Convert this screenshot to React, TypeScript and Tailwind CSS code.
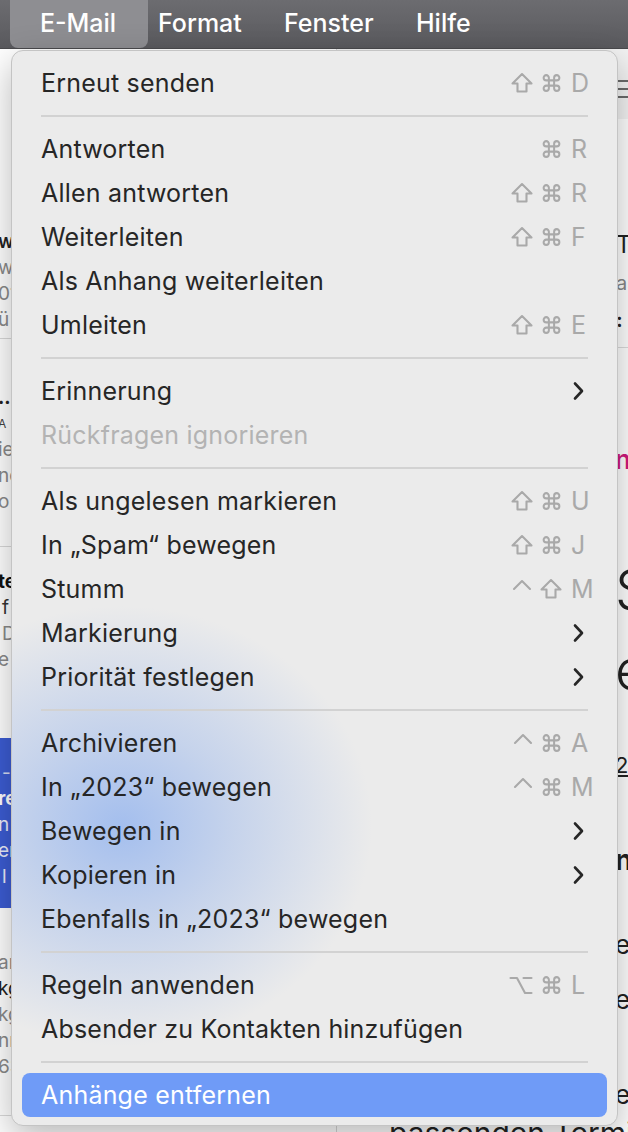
import React from 'react';

type Mod = 'shift' | 'cmd' | 'ctrl' | 'opt';

type Item =
  | { kind: 'sep' }
  | { kind: 'item'; label: string; mods?: Mod[]; k?: string; sub?: boolean; disabled?: boolean; active?: boolean };

const menu: Item[] = [
  { kind: 'item', label: 'Erneut senden', mods: ['shift', 'cmd'], k: 'D' },
  { kind: 'sep' },
  { kind: 'item', label: 'Antworten', mods: ['cmd'], k: 'R' },
  { kind: 'item', label: 'Allen antworten', mods: ['shift', 'cmd'], k: 'R' },
  { kind: 'item', label: 'Weiterleiten', mods: ['shift', 'cmd'], k: 'F' },
  { kind: 'item', label: 'Als Anhang weiterleiten' },
  { kind: 'item', label: 'Umleiten', mods: ['shift', 'cmd'], k: 'E' },
  { kind: 'sep' },
  { kind: 'item', label: 'Erinnerung', sub: true },
  { kind: 'item', label: 'Rückfragen ignorieren', disabled: true },
  { kind: 'sep' },
  { kind: 'item', label: 'Als ungelesen markieren', mods: ['shift', 'cmd'], k: 'U' },
  { kind: 'item', label: 'In „Spam“ bewegen', mods: ['shift', 'cmd'], k: 'J' },
  { kind: 'item', label: 'Stumm', mods: ['ctrl', 'shift'], k: 'M' },
  { kind: 'item', label: 'Markierung', sub: true },
  { kind: 'item', label: 'Priorität festlegen', sub: true },
  { kind: 'sep' },
  { kind: 'item', label: 'Archivieren', mods: ['ctrl', 'cmd'], k: 'A' },
  { kind: 'item', label: 'In „2023“ bewegen', mods: ['ctrl', 'cmd'], k: 'M' },
  { kind: 'item', label: 'Bewegen in', sub: true },
  { kind: 'item', label: 'Kopieren in', sub: true },
  { kind: 'item', label: 'Ebenfalls in „2023“ bewegen' },
  { kind: 'sep' },
  { kind: 'item', label: 'Regeln anwenden', mods: ['opt', 'cmd'], k: 'L' },
  { kind: 'item', label: 'Absender zu Kontakten hinzufügen' },
  { kind: 'sep' },
  { kind: 'item', label: 'Anhänge entfernen', active: true },
];

// slivers of the mail list that peek out left of the menu
const listRows: { h: number; cls: string; lines: { t: string; c: string }[] }[] = [
  { h: 176, cls: '', lines: [] },
  {
    h: 114,
    cls: 'pt-[4px] border-b border-[#d9d9d9]',
    lines: [
      { t: 'wi', c: 'text-[#222] font-semibold' },
      { t: 'wi', c: 'text-[#8a8a8a]' },
      { t: '01', c: 'text-[#8a8a8a]' },
      { t: 'ü', c: 'text-[#8a8a8a]' },
    ],
  },
  {
    h: 208,
    cls: 'pt-[46px] border-b border-[#d9d9d9]',
    lines: [
      { t: '..', c: 'text-[#222] font-bold' },
      { t: 'A', c: 'text-[#444] text-[12px]' },
      { t: 'ie', c: 'text-[#8a8a8a]' },
      { t: 'ne', c: 'text-[#8a8a8a]' },
      { t: 'o', c: 'text-[#8a8a8a]' },
    ],
  },
  {
    h: 191,
    cls: 'pt-[22px]',
    lines: [
      { t: 'te', c: 'text-[#111] font-bold' },
      { t: 'f', c: 'text-[#333] pl-[4px]' },
      { t: 'D', c: 'text-[#8a8a8a] pl-[4px]' },
      { t: 'e', c: 'text-[#8a8a8a]' },
    ],
  },
  {
    h: 170,
    cls: 'pt-[22px] bg-[#3c5cd3] text-white',
    lines: [
      { t: '-', c: 'text-white/80 pl-[4px]' },
      { t: 're', c: 'text-white font-bold' },
      { t: 'n', c: 'text-white/90' },
      { t: 'er', c: 'text-white/90' },
      { t: 'l', c: 'text-white/90 pl-[4px]' },
    ],
  },
  {
    h: 208,
    cls: 'pt-[42px] border-b border-[#d9d9d9]',
    lines: [
      { t: 'ar', c: 'text-[#8a8a8a]' },
      { t: 'kg', c: 'text-[#222]' },
      { t: 'kg', c: 'text-[#8a8a8a]' },
      { t: 'nr', c: 'text-[#8a8a8a]' },
      { t: '63', c: 'text-[#8a8a8a]' },
    ],
  },
];

const ModIcon: React.FC<{ m: Mod }> = ({ m }) => {
  const common = {
    fill: 'none',
    stroke: '#a9a9a9',
    strokeWidth: 2.1,
    strokeLinecap: 'round' as const,
    strokeLinejoin: 'round' as const,
  };
  if (m === 'shift')
    return (
      <svg width="22" height="22" viewBox="0 0 22 22" className="block">
        <path d="M11 2 L20.5 11.5 H15.5 V19.5 H6.5 V11.5 H1.5 Z" {...common} />
      </svg>
    );
  if (m === 'cmd')
    return (
      <svg width="21" height="22" viewBox="0 0 24 24" className="block">
        <path
          d="M15 6v12a3 3 0 1 0 3-3H6a3 3 0 1 0 3 3V6a3 3 0 1 0-3 3h12a3 3 0 1 0-3-3"
          {...common}
          strokeWidth={2.3}
        />
      </svg>
    );
  if (m === 'ctrl')
    return (
      <svg width="20" height="22" viewBox="0 0 20 22" className="block">
        <path d="M2 11 L10 3 L18 11" {...common} />
      </svg>
    );
  return (
    <svg width="24" height="22" viewBox="0 0 24 22" className="block">
      <path d="M1.5 4 H8 L16 19 H22.5 M14.5 4 H22.5" {...common} />
    </svg>
  );
};

const Chevron = () => (
  <svg width="14" height="20" viewBox="0 0 14 20" className="block">
    <path d="M4 2.5 L11 10 L4 17.5" fill="none" stroke="#262626" strokeWidth="2.6" strokeLinecap="round" strokeLinejoin="round" />
  </svg>
);

const MenuRow: React.FC<{ item: Extract<Item, { kind: 'item' }> }> = ({ item }) => {
  const base = item.active
    ? 'bg-[#6f9bf7] text-white rounded-[8px]'
    : item.disabled
    ? 'text-[#b3b3b3]'
    : 'text-[#262626]';
  return (
    <div className={`h-[44px] shrink-0 flex items-center pl-[19px] pr-[12px] ${base}`}>
      <span className="flex-1 text-[25px] leading-none tracking-[0.2px] whitespace-nowrap">{item.label}</span>
      {item.mods && (
        <span className="flex items-center gap-[8px]">
          {item.mods.map((m, i) => (
            <ModIcon key={i} m={m} />
          ))}
        </span>
      )}
      {item.mods && <span className="w-[24px] ml-[9px] text-[25px] leading-none text-[#a9a9a9]">{item.k}</span>}
      {item.sub && (
        <span className="w-[24px] flex">
          <Chevron />
        </span>
      )}
    </div>
  );
};

export default function App() {
  return (
    <div className="relative w-[628px] h-[1132px] overflow-hidden bg-white font-['Inter','Noto_Sans',sans-serif]">
      {/* menu bar */}
      <div className="h-[49px] flex items-stretch bg-gradient-to-b from-[#6c6c70] to-[#5a5a5e] border-b border-[#4a4a4d] text-white text-[25px] font-medium">
        <div className="ml-[10px] w-[138px] rounded-b-[8px] bg-[#8e8e92] flex items-center justify-center pr-[2px]">E-Mail</div>
        <div className="ml-[10px] w-[126px] flex items-center">Format</div>
        <div className="w-[132px] flex items-center">Fenster</div>
        <div className="flex items-center">Hilfe</div>
      </div>

      {/* window content behind the menu */}
      <div className="flex h-[1083px]">
        <div className="w-[339px] shrink-0 border-r border-[#d6d6d6] bg-white flex flex-col text-[19px] leading-[26px] -ml-[2px]">
          {listRows.map((r, i) => (
            <div key={i} className={`shrink-0 ${r.cls}`} style={{ height: r.h }}>
              {r.lines.map((l, j) => (
                <div key={j} className={l.c}>
                  {l.t}
                </div>
              ))}
            </div>
          ))}
        </div>
        <div className="flex-1 min-w-0 flex flex-col text-[#222] whitespace-nowrap [&>*]:shrink-0">
          <div className="h-[70px] bg-[#f3f3f3] flex items-center pl-[279px] pt-[10px]">
            <svg width="14" height="22" viewBox="0 0 14 22" className="shrink-0">
              <path d="M0 3 H14 M0 11 H14 M0 19 H14" stroke="#6b6b6b" strokeWidth="2.2" />
            </svg>
          </div>
          <div className="pl-[279px] flex flex-col">
            <div className="mt-[112px] text-[24px] leading-[28px]">Te</div>
            <div className="mt-[11px] text-[20px] leading-[26px] text-[#888]">as</div>
            <div className="mt-[11px] text-[20px] leading-[26px] font-bold">:</div>
          </div>
          <div className="mt-[14px] border-t border-[#dcdcdc]" />
          <div className="pl-[278px] flex flex-col">
            <div className="mt-[97px] text-[26px] leading-[30px] text-[#d0197c] font-semibold">nd</div>
            <div className="mt-[85px] text-[56px] leading-[60px] font-light">S</div>
            <div className="mt-[20px] text-[56px] leading-[60px] font-light">e</div>
            <div className="mt-[51px] text-[22px] leading-[28px] underline">2</div>
            <div className="mt-[65px] text-[28px] leading-[32px] font-bold">n</div>
            <div className="mt-[54px] text-[26px] leading-[30px]">e</div>
            <div className="mt-[25px] text-[26px] leading-[30px]">er</div>
            <div className="mt-[65px] text-[26px] leading-[30px]">e</div>
          </div>
          <div className="mt-[6px] pl-[52px] text-[30px] leading-[34px]">passenden Termin</div>
        </div>
      </div>

      {/* open E-Mail menu */}
      <div className="absolute left-[11px] top-[50px] w-[607px] rounded-[12px] border border-[#c4c4c4] bg-[#ebebeb] bg-[image:radial-gradient(ellipse_250px_220px_at_110px_775px,rgba(160,188,238,0.95),rgba(168,192,236,0.55)_45%,rgba(235,235,235,0)_100%)] shadow-[0_12px_36px_rgba(0,0,0,0.28)] pt-[10px] pb-[8px] px-[10px] flex flex-col">
        {menu.map((it, i) =>
          it.kind === 'sep' ? (
            <div key={i} className="h-[22px] shrink-0 flex items-center px-[19px]">
              <div className="h-[2px] w-full bg-[#d2d2d2]" />
            </div>
          ) : (
            <MenuRow key={i} item={it} />
          ),
        )}
      </div>
    </div>
  );
}
